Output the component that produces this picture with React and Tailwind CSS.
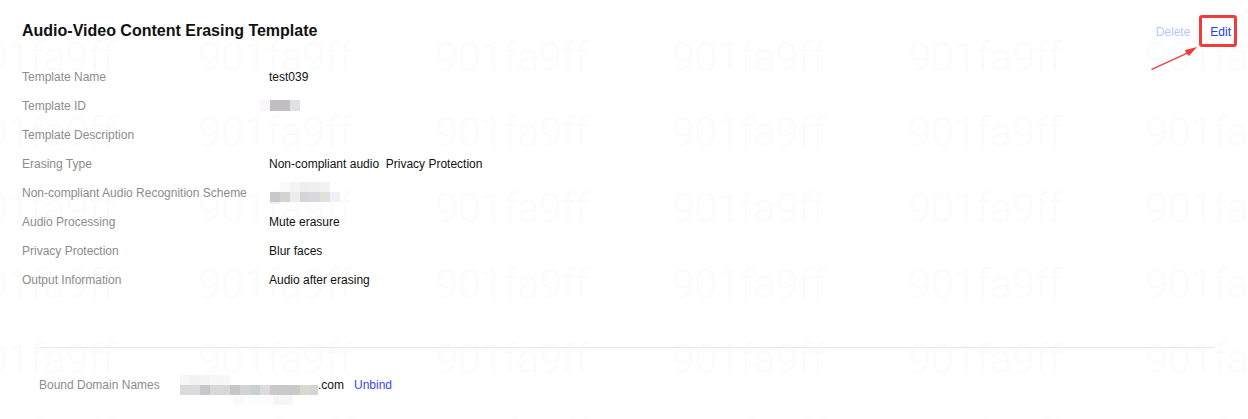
import React from "react";

const rows = [
  ["Template Name", "test039"],
  ["Template ID", "ID"],
  ["Template Description", ""],
  ["Erasing Type", "Non-compliant audio\u00a0\u00a0Privacy Protection"],
  ["Non-compliant Audio Recognition Scheme", "SCHEME"],
  ["Audio Processing", "Mute erasure"],
  ["Privacy Protection", "Blur faces"],
  ["Output Information", "Audio after erasing"],
];

function Watermark() {
  const cells = [];
  for (let r = 0; r < 6; r++) {
    for (let c = 0; c < 6; c++) {
      cells.push(
        <div key={`${r}-${c}`} className="w-[236.6px] h-[75.7px] shrink-0">
          <span className="block text-[41px] leading-none font-light text-[#fbfbfb] font-['Roboto',sans-serif] whitespace-nowrap">
            901fa9ff
          </span>
        </div>
      );
    }
  }
  return (
    <div aria-hidden="true" className="absolute left-[-38px] top-[36.6px] w-[1420px] flex flex-wrap pointer-events-none select-none">
      {cells}
    </div>
  );
}

function Mosaic({ kind }) {
  if (kind === "ID") {
    return (
      <div className="flex h-[11px] ml-[-9px]">
        <div className="w-[10px] bg-[#f8f6f8]" />
        <div className="w-[20px] bg-[#c1bfc1]" />
        <div className="w-[10px] bg-[#e1e1e5]" />
      </div>
    );
  }
  if (kind === "SCHEME") {
    return (
      <div className="relative h-[20px] w-[72px] ml-[1px] mt-[-2px]">
        <div className="absolute left-[10px] top-0 flex h-[10px]">
          <div className="w-[10px] bg-[#fafafa]" />
          <div className="w-[10px] bg-[#f4f4f6]" />
          <div className="w-[10px] bg-[#eeeef0]" />
          <div className="w-[10px] bg-[#f0f0f0]" />
          <div className="w-[10px] bg-[#f2f2f2]" />
        </div>
        <div className="absolute left-0 top-[10px] flex h-[10px]">
          <div className="w-[10px] bg-[#c8c8cb]" />
          <div className="w-[10px] bg-[#d6d2d0]" />
          <div className="w-[10px] bg-[#ececee]" />
          <div className="w-[10px] bg-[#d4d5d9]" />
          <div className="w-[10px] bg-[#d8dadc]" />
          <div className="w-[10px] bg-[#e3e1de]" />
          <div className="w-[10px] bg-[#f1f1f5]" />
        </div>
        <div className="absolute left-0 top-[20px] w-[10px] h-[2px] bg-[#eef0f4]" />
      </div>
    );
  }
  return null;
}

export default function App() {
  return (
    <div className="relative w-[1248px] h-[419px] bg-white overflow-hidden font-['Liberation_Sans',Arial,sans-serif]">
      <Watermark />
      <div className="relative">
        <div className="flex items-start justify-between pl-[22px] pr-[17px] pt-[21px]">
          <h1 className="text-[16px] leading-[20px] font-bold text-[#111]">
            Audio-Video Content Erasing Template
          </h1>
          <div className="flex items-center gap-[20px] text-[12px] leading-[20px] mt-[1px]">
            <span className="text-[#b7c8fb]">Delete</span>
            <span className="text-[#2040e8]">Edit</span>
          </div>
        </div>

        <div className="pl-[22px] mt-[20px]">
          {rows.map(([label, value]) => (
            <div key={label} className="flex items-center h-[29px] text-[12px]">
              <div className="w-[247px] text-[#8c8c8c]">{label}</div>
              <div className="text-[#111]">
                {value === "ID" || value === "SCHEME" ? <Mosaic kind={value} /> : value}
              </div>
            </div>
          ))}
        </div>

        <div className="ml-[39px] mr-[34px] mt-[53px] h-px bg-[#e6e6e6]" />

        <div className="flex items-center pl-[39px] mt-[27px] h-[20px] text-[12px]">
          <div className="w-[141px] text-[#8c8c8c]">Bound Domain Names</div>
          <div className="relative w-[138px] h-[20px]">
            <div className="absolute left-0 top-0 flex h-[10px]">
              <div className="w-[10px] bg-[#f6f6f6]" />
              <div className="w-[10px] bg-[#f2f2f2]" />
              <div className="w-[10px] bg-[#f4f4f4]" />
              <div className="w-[20px] bg-[#f7f7f7]" />
            </div>
            <div className="absolute left-0 top-[10px] flex h-[10px]">
              <div className="w-[20px] bg-[#dadadc]" />
              <div className="w-[10px] bg-[#c8c6ca]" />
              <div className="w-[20px] bg-[#d8d8d8]" />
              <div className="w-[10px] bg-[#c6c6c8]" />
              <div className="w-[10px] bg-[#d4d4d6]" />
              <div className="w-[10px] bg-[#c8d0d2]" />
              <div className="w-[10px] bg-[#dcdcde]" />
              <div className="w-[30px] bg-[#cacaca]" />
              <div className="w-[10px] bg-[#dcd8d0]" />
              <div className="w-[8px] bg-[#d2d4d8]" />
            </div>
            <div className="absolute left-[53px] top-[20px] flex h-[10px]">
              <div className="w-[10px] bg-[#fafafa]" />
              <div className="w-[30px] bg-[#fdfdfd]" />
              <div className="w-[20px] bg-[#f6f6f6]" />
            </div>
          </div>
          <span className="text-[#111]">.com</span>
          <span className="ml-[10px] text-[#3848f0]">Unbind</span>
        </div>
      </div>

      <div className="absolute left-[1199px] top-[15px] w-[38px] h-[32px] border-[3px] border-[#f23b3b] rounded-[3px] pointer-events-none" />
      <svg className="absolute left-[1148px] top-[44px] pointer-events-none" width="52" height="28" viewBox="0 0 52 28">
        <polygon points="3,25 38,9 37,6 49,3 41,12 39,10 4,26" fill="#f23b3b" />
      </svg>
    </div>
  );
}
